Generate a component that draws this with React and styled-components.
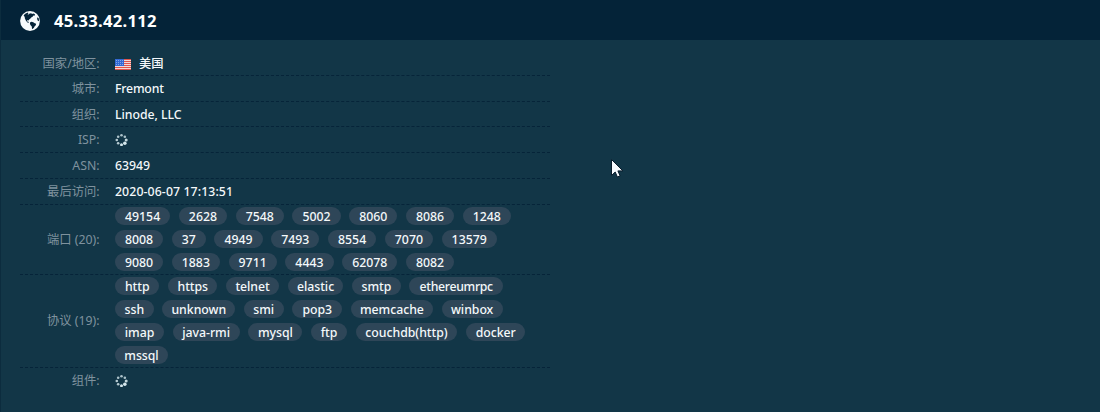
import React from 'react';
import styled, { createGlobalStyle } from 'styled-components';

const Global = createGlobalStyle`
  * { box-sizing: border-box; }
  html, body { margin: 0; padding: 0; background: #123647; overflow: hidden; }
`;

const Page = styled.div`
  position: relative;
  width: 1100px;
  height: 412px;
  background: #123647;
  border-left: 1px solid #0c2c3e;
  color: #f4f8fa;
  font-family: "Noto Sans", "Noto Sans CJK SC", sans-serif;
  font-size: 12.3px;
`;

const Header = styled.header`
  display: flex;
  align-items: center;
  height: 40px;
  padding: 2px 0 0 19px;
  background: #042338;
`;

const Title = styled.h1`
  margin: 0 0 0 14px;
  font-size: 16.6px;
  line-height: 22px;
  font-weight: 700;
  letter-spacing: 0.28px;
  color: #ffffff;
`;

const Details = styled.div`
  width: 530px;
  margin: 10px 0 0 19px;
`;

const Row = styled.div`
  display: flex;
  align-items: center;
  height: ${(p) => p.$h}px;
  padding-top: ${(p) => p.$top || 0}px;
  border-bottom: 1px dashed ${(p) => (p.$last ? 'transparent' : '#062439')};
`;

const Label = styled.div`
  flex: none;
  width: 79.6px;
  margin-right: 15.4px;
  text-align: right;
  line-height: 18px;
  color: #7f929e;
  white-space: nowrap;
`;

const Value = styled.div`
  display: flex;
  align-items: center;
  line-height: 18px;
  font-weight: 500;
  white-space: nowrap;
  letter-spacing: ${(p) => p.$track || 0}px;
`;

const Country = styled.span`
  margin-left: 8px;
`;

const Chips = styled.div`
  display: flex;
  flex-direction: column;
  align-self: flex-start;
  gap: 5px;
  padding-top: 2px;
`;

const ChipLine = styled.div`
  display: flex;
  gap: 8.6px;
`;

const Chip = styled.span`
  flex: none;
  display: flex;
  justify-content: center;
  width: ${(p) => p.$w}px;
  height: 18px;
  border-radius: 9px;
  background: #2e4658;
  line-height: 20px;
  font-weight: 500;
  white-space: nowrap;
  letter-spacing: ${(p) => p.$track || 0}px;
`;

const Pointer = styled.svg`
  position: absolute;
  left: 608.5px;
  top: 158px;
`;

const FlagIcon = styled.svg`
  display: block;
  margin-top: 2px;
`;

const Globe = () => (
  <svg width="20" height="20" viewBox="0 0 20 20">
    <circle cx="10" cy="10" r="9.9" fill="#f7fbfd" />
    <path fill="#042338" d="M3.6 4.2 5.6 2.4 8 1.6l.4.9-1 .8 1.3.2.9-1 1.8-.2.5.8 1.6-.7 1.5.9-.4 1.4-1.2-.2-.8 1.2-1.4.9-1 1.2-1.1.6-.2 1-1.2-.4-.7.9.8.9.9-.1.2 1.1-1.5-.2L6 9.8 4.9 7.6 4.7 6z" />
    <path fill="#042338" d="m10.2 11.3 1.6-.5 1.9.6 1 .9 1.4.5-.3 1.5-1.1 1-.8 1.4-1.1 1-.8.2-.2-2.3-1.4-1.6-.5-1.4z" />
    <path fill="#042338" d="m17.4 6.3 1.2.8.5 2.2-.3 1-1.1-.9-.6-1.5z" />
  </svg>
);

const Flag = () => (
  <FlagIcon width="16" height="11" viewBox="0 0 16 11">
    <rect width="16" height="11" fill="#f5e9e8" />
    {[0, 2, 4, 6, 8, 10].map((y) => (
      <rect key={y} y={y} width="16" height="1.1" fill="#e0564b" />
    ))}
    <rect width="9" height="7" fill="#3269d4" />
    {[1, 3, 5].map((y) =>
      [1.5, 3.5, 5.5, 7.5].map((x) => (
        <circle key={`${x}-${y}`} cx={x} cy={y + 0.5} r=".45" fill="#d8e6fb" />
      ))
    )}
  </FlagIcon>
);

const dots = [0.85, 0.95, 0.95, 0.8, 0.8, 0.75, 0.75, 0.75];
const Spinner = () => (
  <svg width="13" height="13" viewBox="0 0 13 13">
    {dots.map((o, i) => {
      const a = (i * Math.PI) / 4;
      return (
        <circle
          key={i}
          cx={6.5 + 4.7 * Math.cos(a)}
          cy={7 + 4.7 * Math.sin(a)}
          r={i === 1 ? 1.8 : i === 0 || i === 2 ? 1.5 : 1.3}
          fill="#e0f1f5"
          opacity={o}
        />
      );
    })}
  </svg>
);

const ports = [
  ['49154', '2628', '7548', '5002', '8060', '8086', '1248'],
  ['8008', '37', '4949', '7493', '8554', '7070', '13579'],
  ['9080', '1883', '9711', '4443', '62078', '8082'],
].map((line) => line.map((p) => [p, 20 + p.length * 7.05]));

const protocols = [
  [['http', 44.5], ['https', 49.4], ['telnet', 53], ['elastic', 55.8], ['smtp', 48.8], ['ethereumrpc', 93.5, -0.32]],
  [['ssh', 38.8], ['unknown', 72.8], ['smi', 39.9], ['pop3', 50], ['memcache', 82.2], ['winbox', 61]],
  [['imap', 49], ['java-rmi', 67.2], ['mysql', 54], ['ftp', 36], ['couchdb(http)', 101.8], ['docker', 59.5]],
  [['mssql', 53]],
];

const ChipGroup = ({ lines, track }) => (
  <Chips>
    {lines.map((line, i) => (
      <ChipLine key={i}>
        {line.map(([text, w, own]) => (
          <Chip key={text} $w={w} $track={own ?? track}>{text}</Chip>
        ))}
      </ChipLine>
    ))}
  </Chips>
);

export default function App() {
  return (
    <>
      <Global />
      <Page>
        <Header>
          <Globe />
          <Title>45.33.42.112</Title>
        </Header>
        <Details>
          <Row $h={26} $top={2}><Label>国家/地区:</Label><Value><Flag /><Country>美国</Country></Value></Row>
          <Row $h={26}><Label>城市:</Label><Value $track={-0.2}>Fremont</Value></Row>
          <Row $h={25} $top={1}><Label>组织:</Label><Value $track={-0.05}>Linode, LLC</Value></Row>
          <Row $h={26}><Label>ISP:</Label><Value><Spinner /></Value></Row>
          <Row $h={26}><Label>ASN:</Label><Value>63949</Value></Row>
          <Row $h={26}><Label>最后访问:</Label><Value $track={0.1}>2020-06-07 17:13:51</Value></Row>
          <Row $h={70}><Label>端口 (20):</Label><ChipGroup lines={ports} /></Row>
          <Row $h={93}><Label>协议 (19):</Label><ChipGroup lines={protocols} track={-0.04} /></Row>
          <Row $h={26} $last><Label>组件:</Label><Value><Spinner /></Value></Row>
        </Details>
        <Pointer width="14" height="22" viewBox="0 0 14 22">
          <path d="M1.500 1.500v16l3.700-3.500 2.200 5 2.700-1.200-2.200-4.900h5z" fill="#f8fbff" stroke="#0a1c2c" strokeWidth="1" />
        </Pointer>
      </Page>
    </>
  );
}
